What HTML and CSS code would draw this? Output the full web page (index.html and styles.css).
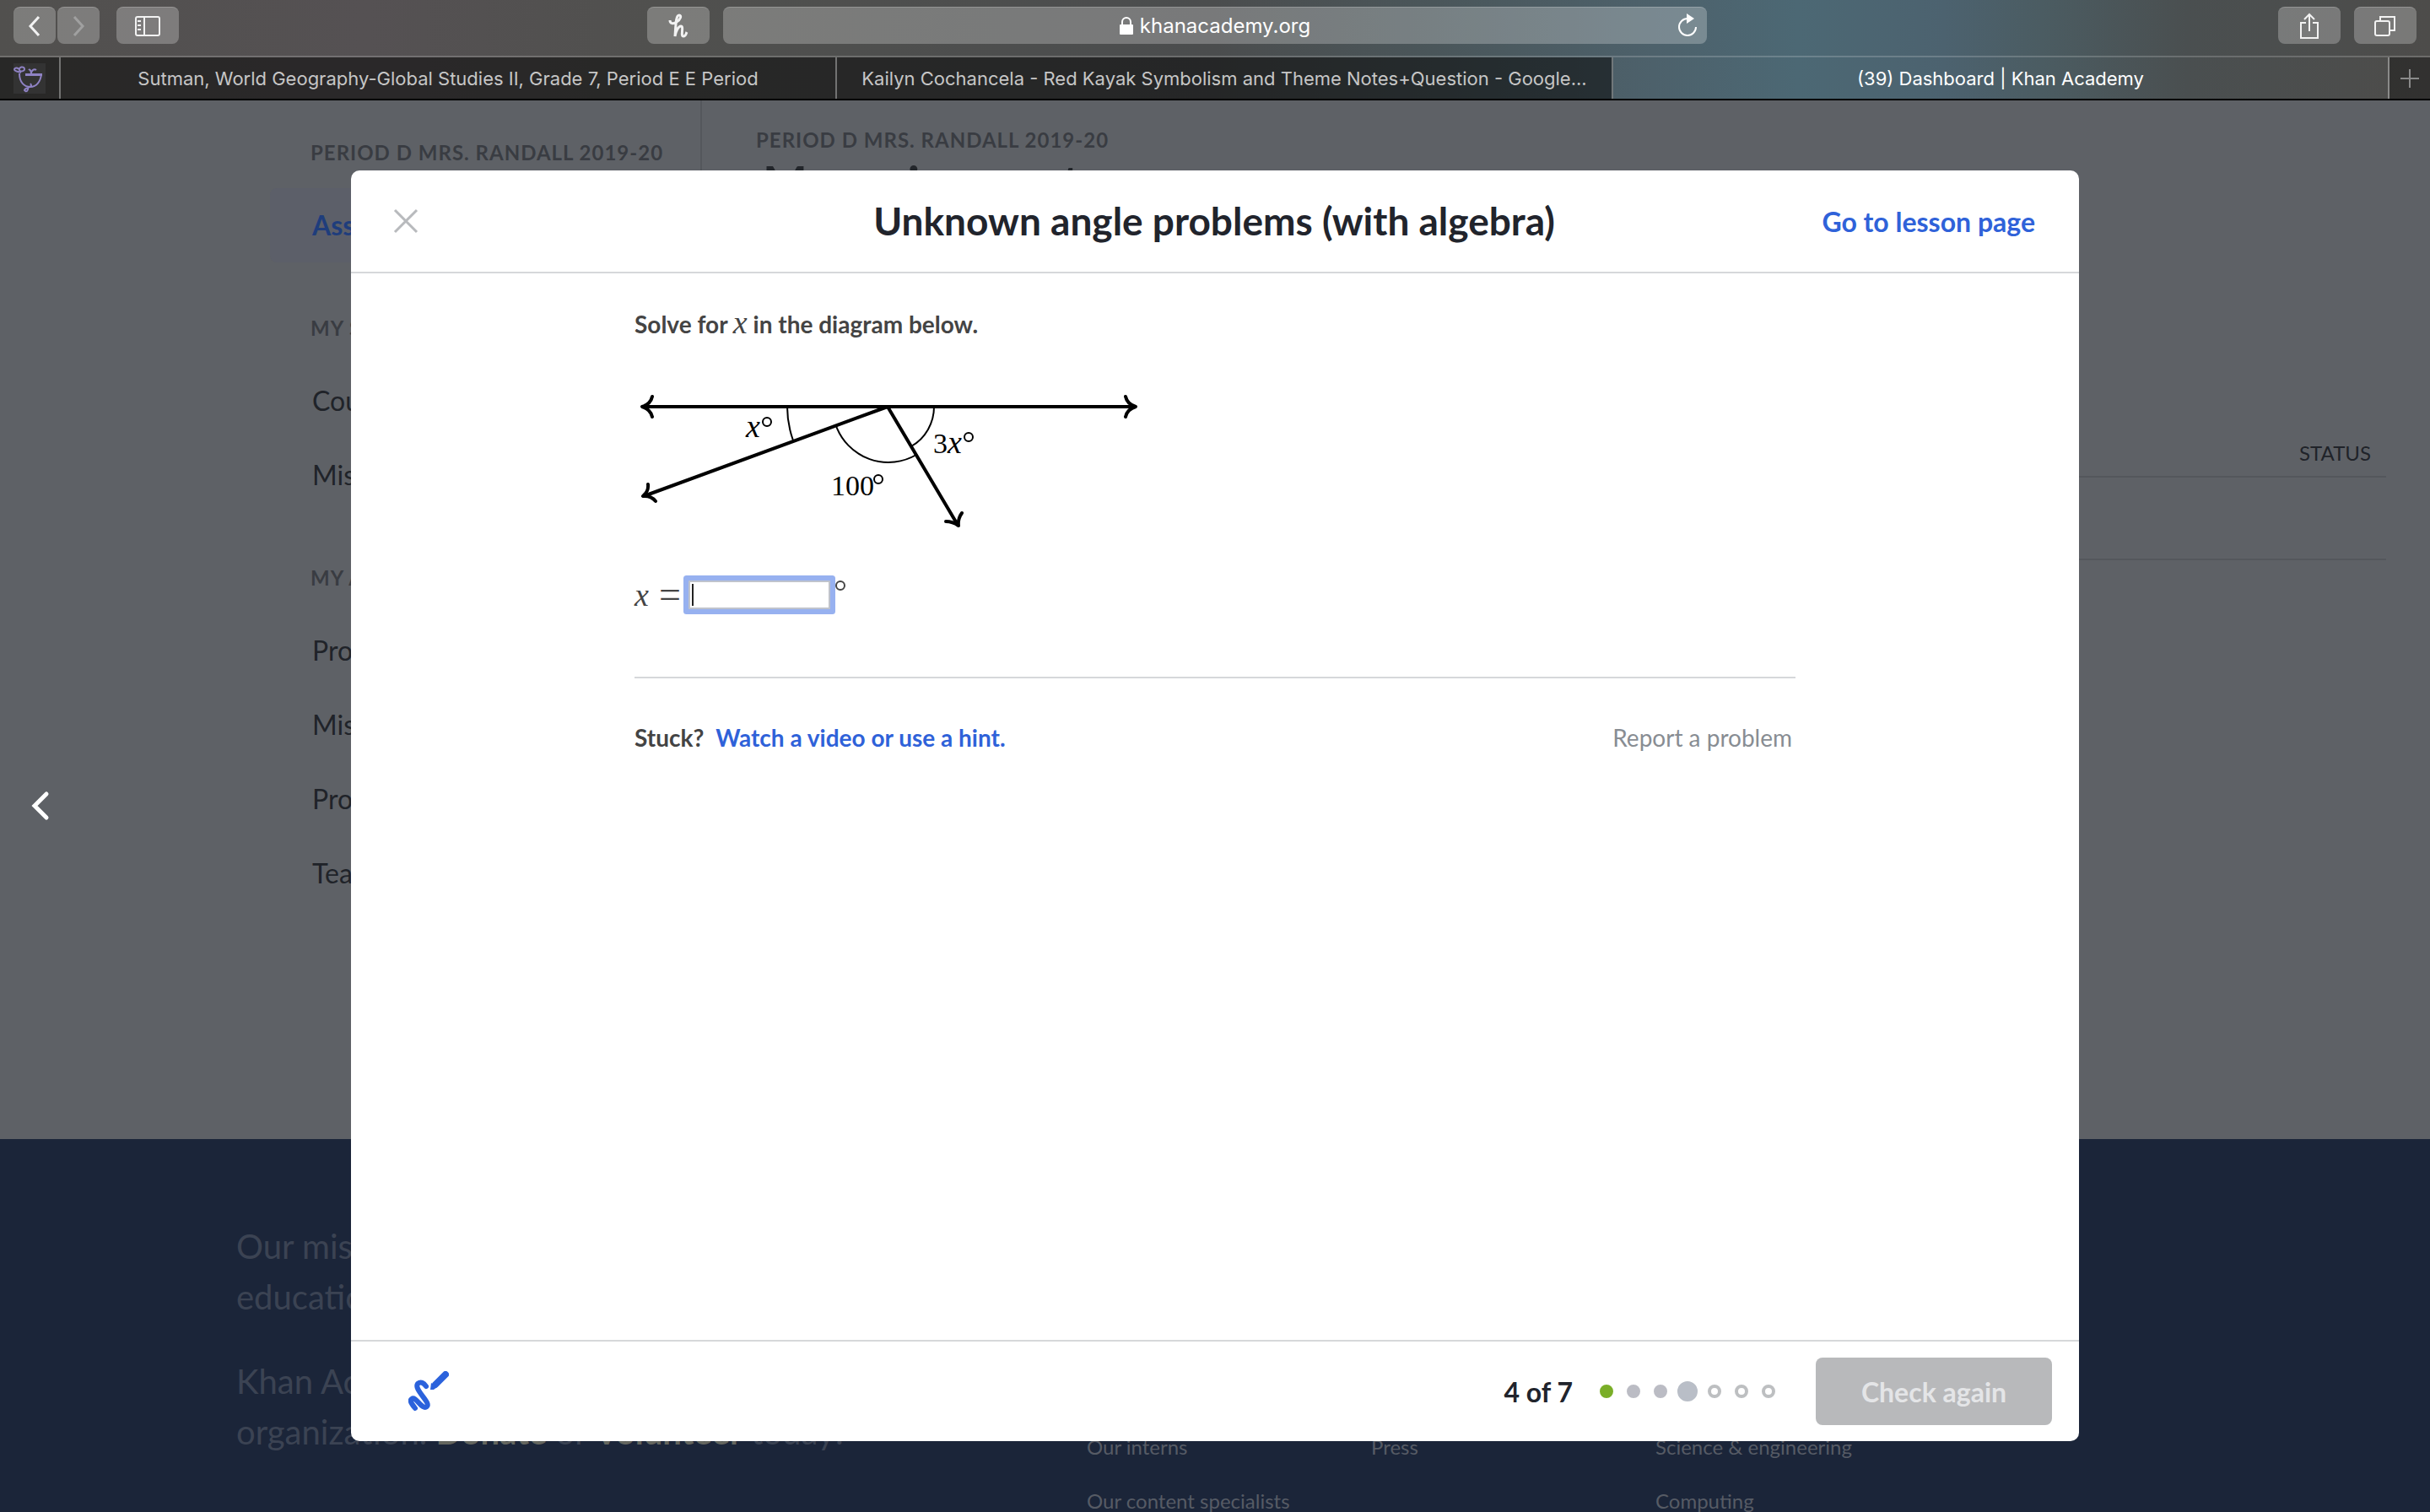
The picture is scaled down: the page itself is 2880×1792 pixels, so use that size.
FILE: index.html
```html
<!DOCTYPE html>
<html lang="en">
<head>
<meta charset="utf-8">
<title>(39) Dashboard | Khan Academy</title>
<link rel="stylesheet" href="styles.css">
</head>
<body>
<header class="browser">
  <div class="toolbar">
    <div class="tools">
      <button class="tool tool-narrow" aria-label="Back"><svg width="16" height="28" viewBox="0 0 16 28"><path d="M13 3 3 14l10 11" /></svg></button>
      <button class="tool tool-narrow tool-off" aria-label="Forward"><svg width="16" height="28" viewBox="0 0 16 28"><path d="m3 3 10 11L3 25" /></svg></button>
      <button class="tool tool-sidebar" aria-label="Show sidebar"><svg width="32" height="26" viewBox="0 0 32 26"><rect x="2" y="2" width="28" height="22" rx="2"/><path d="M12 2v22M4 7h4M4 12h4M4 17h4"/></svg></button>
      <button class="tool tool-honey" aria-label="Honey"><svg class="honey" width="26" height="30" viewBox="0 0 26 30"><path d="M3 8c0 4 4 5 8 2 5-3 6-8 3-8-4 0-4 10-5 25 1-6 4-12 7-12 4 0-1 12 3 12 3 0 3-3 4-5"/></svg></button>
    </div>
    <div class="address">
      <span class="address-text"><svg width="16" height="22" viewBox="0 0 16 22"><rect class="solid" x="0" y="9" width="16" height="12" rx="1"/><path d="M3 10V6a5 5 0 0 1 10 0v4"/></svg>khanacademy.org</span>
      <button class="reload" aria-label="Reload"><svg width="26" height="30" viewBox="0 0 26 30"><path d="M23 16A10 10 0 1 1 13 6"/><path class="solid" d="M12 0v12l9-6z"/></svg></button>
    </div>
    <div class="tools tools-right">
      <button class="tool" aria-label="Share"><svg width="26" height="34" viewBox="0 0 26 34"><path d="M9 13H3v18h20V13h-6M13 23V3M7 9l6-6 6 6"/></svg></button>
      <button class="tool" aria-label="Show tabs"><svg width="28" height="28" viewBox="0 0 28 28"><rect x="2" y="8" width="17" height="17" rx="2"/><path d="M8 8V3h17v16h-5"/></svg></button>
    </div>
  </div>
  <nav class="tabs">
    <a class="tab pinned" href="#" aria-label="Pinned tab"><svg class="mortar" width="38" height="36" viewBox="0 0 38 36"><path d="M7 12c0 11 6 16 13 16s12-6 13-15H14M14 14h20M9 11c-3-1-8-1-8-4 1-3 7-1 6 2m0-1c-1-4 6-5 6-1 0 2-3 3-6 2M18 8c2-2 3 3 3 4 0-3 3-6 6-4M20 24c4 5-6 4-7 8 2 3 5 0 4-3"/></svg></a>
    <a class="tab" href="#">Sutman, World Geography-Global Studies II, Grade 7, Period E E Period</a>
    <a class="tab" href="#">Kailyn Cochancela - Red Kayak Symbolism and Theme Notes+Question - Google...</a>
    <a class="tab active" href="#">(39) Dashboard | Khan Academy</a>
    <button class="new-tab" aria-label="New tab"><svg width="24" height="24" viewBox="0 0 24 24"><path d="M12 1v22M1 12h22"/></svg></button>
  </nav>
</header>

<div class="page">
  <div class="dashboard">
    <nav class="side">
      <h2 class="eyebrow">PERIOD D MRS. RANDALL 2019-20</h2>
      <a class="side-link current" href="#">Assignments</a>
      <h2 class="eyebrow">MY STUFF</h2>
      <a class="side-link" href="#">Courses</a>
      <a class="side-link" href="#">Missions</a>
      <h2 class="eyebrow">MY ACCOUNT</h2>
      <a class="side-link" href="#">Progress</a>
      <a class="side-link" href="#">Missions</a>
      <a class="side-link" href="#">Profile</a>
      <a class="side-link" href="#">Teachers</a>
    </nav>
    <main class="work">
      <p class="eyebrow">PERIOD D MRS. RANDALL 2019-20</p>
      <h1 class="work-title">My assignments</h1>
      <table class="work-table">
        <thead><tr><th>STATUS</th></tr></thead>
        <tbody><tr><td></td></tr></tbody>
      </table>
    </main>
  </div>
  <footer class="site-footer">
    <div class="mission">
      <p>Our mission is to provide a free, world-class education for anyone, anywhere.</p>
      <p>Khan Academy is a 501(c)(3) nonprofit organization. <a href="#">Donate</a> or <a href="#">Volunteer</a> today!</p>
    </div>
    <ul class="links">
      <li>About</li><li><a href="#">News</a></li><li><a href="#">Impact</a></li><li><a href="#">Our team</a></li><li><a href="#">Our interns</a></li><li><a href="#">Our content specialists</a></li>
    </ul>
    <ul class="links">
      <li>Contact</li><li><a href="#">Help center</a></li><li><a href="#">Community</a></li><li><a href="#">Share your story</a></li><li><a href="#">Press</a></li>
    </ul>
    <ul class="links">
      <li>Courses</li><li><a href="#">Math by grade</a></li><li><a href="#">Math</a></li><li><a href="#">Test prep</a></li><li><a href="#">Science &amp; engineering</a></li><li><a href="#">Computing</a></li>
    </ul>
  </footer>

  <button class="previous" aria-label="Previous"><svg width="24" height="38" viewBox="0 0 24 38"><path d="M19 4 5 18l14 14"/></svg></button>

  <section class="modal" role="dialog" aria-labelledby="exercise-title">
    <header class="modal-head">
      <button class="close" aria-label="Close"><svg width="30" height="30" viewBox="0 0 30 30"><path d="m2 2 26 26M28 2 2 28"/></svg></button>
      <h2 class="modal-title" id="exercise-title">Unknown angle problems (with algebra)</h2>
      <a class="lesson" href="#">Go to lesson page</a>
    </header>
    <div class="modal-body">
      <p class="question">Solve for <i class="math">x</i> in the diagram below.</p>
      <svg class="diagram" width="620" height="180" viewBox="0 0 620 180" role="img" aria-label="Three angles on a line">
        <g class="rays">
          <path d="M10 32h583M300 32 11 138M300 32l83 140"/>
          <path d="M21 20q-2 9-12 12 10 3 12 12M582 20q2 9 12 12-10 3-12 12"/>
          <path d="M16 124q1 8-6 14 9-1 15 6M388 158q-5 7-4 15-7-5-15-5"/>
        </g>
        <g class="arcs">
          <path d="M181 32a120 120 0 0 0 7 40M239 55a66 66 0 0 0 95 34M355 32a54 54 0 0 1-27 47"/>
        </g>
        <text x="132" y="68"><tspan class="it">x</tspan></text><circle cx="157" cy="50" r="5"/>
        <text x="354" y="87">3<tspan class="it">x</tspan></text><circle cx="396" cy="68" r="5"/>
        <text x="233" y="137">100</text><circle cx="289" cy="118" r="5"/>
      </svg>
      <div class="answer">
        <label for="answer"><i class="math">x</i><span class="equals">=</span></label>
        <span class="field"><input id="answer" type="text"><span class="caret"></span></span>
        <svg class="degree" width="12" height="12" viewBox="0 0 12 12"><circle cx="6" cy="6" r="5"/></svg>
      </div>
      <div class="help">
        <p>Stuck?<a href="#">Watch a video or use a hint.</a></p>
        <a class="report" href="#">Report a problem</a>
      </div>
    </div>
    <footer class="modal-foot">
      <button class="scratch" aria-label="Scratchpad"><svg width="48" height="48" viewBox="0 0 48 48"><path d="M8 44C4 39 1 35 4 33c5-4 12 14 18 9C27 37 6 22 11 15c4-3 7-1 10 3"/><path class="pen" d="M32 16 44 4"/><path class="solid" d="m26 22 1-8 7 5-4 3z"/></svg></button>
      <span class="count">4 of 7</span>
      <ol class="dots"><li class="right"></li><li class="done"></li><li class="done"></li><li class="now"></li><li></li><li></li><li></li></ol>
      <button class="check" disabled>Check again</button>
    </footer>
  </section>
</div>
</body>
</html>
```
FILE: styles.css
```css
* { box-sizing: border-box; }
body {
  margin: 0;
  height: 100vh;
  display: flex;
  flex-direction: column;
  overflow: hidden;
  font-family: Lato, "Liberation Sans", sans-serif;
  font-size: 28px;
}
h1, h2, p, ul, ol { margin: 0; padding: 0; }
ul, ol { list-style: none; }
a { text-decoration: none; color: inherit; }
button { font: inherit; border: 0; padding: 0; background: none; }
svg { display: block; fill: none; stroke: currentColor; }
svg .solid { fill: currentColor; stroke: none; }

/* Browser chrome */
.browser {
  flex: none;
  font-family: Inter, "Liberation Sans", sans-serif;
  background: linear-gradient(90deg, #51504e 0%, #555153 15%, #50504e 27%, #4b4d4e 50%, #4a565a 59%, #4d616b 68%, #4c6874 74%, #4c626f 80%, #4b5c62 84%, #4a4f50 90%, #4d4c4a 100%);
  border-bottom: 2px solid #000;
}
.toolbar {
  display: grid;
  grid-template-columns: 1fr minmax(0, 1166px) 1fr;
  gap: 16px;
  padding: 8px 16px 14px;
}
.tools { display: flex; }
.tools-right { justify-content: flex-end; gap: 16px; }
.tool {
  width: 74px;
  height: 44px;
  display: grid;
  place-items: center;
  border-radius: 8px;
  border-top: 1px solid #ffffff33;
  background: #ffffff40;
  color: #f2f2f2;
  stroke-width: 2;
}
.tool-narrow { width: 50px; stroke-width: 3; margin-right: 2px; }
.tool-off { color: #a0a0a0; }
.tool-sidebar { margin-left: 18px; }
.tool-honey { margin-left: auto; }
.honey { stroke-width: 3; }
.address {
  display: flex;
  align-items: center;
  border-radius: 8px;
  border-top: 1px solid #ffffff33;
  background: #ffffff40;
  color: #fff;
  font-size: 24px;
  stroke-width: 2;
  padding: 0 10px 0 36px;
}
.address-text { flex: 1; display: flex; justify-content: center; align-items: center; gap: 8px; }
.reload { color: inherit; }
.tabs {
  display: flex;
  height: 51px;
  border-top: 2px solid #ffffff2e;
  font-size: 22px;
}
.tab {
  flex: 1 1 0;
  display: grid;
  place-items: center;
  white-space: nowrap;
  overflow: hidden;
  border-right: 2px solid #ffffff59;
  background: #00000080;
  color: #c6c6c6;
}
.tab.active { background: none; color: #fff; }
.pinned { flex: 0 0 72px; }
.mortar { background: #333; color: #8f82c4; stroke-width: 2; }
.new-tab { width: 48px; display: grid; place-items: center; background: #00000059; color: #8a8a8a; stroke-width: 2; }

/* Dimmed dashboard behind the dialog */
.page { flex: 1; position: relative; overflow: hidden; background: #5e6166; }
.dashboard { display: flex; }
.side {
  width: 832px;
  padding: 46px 0 271px 320px;
  border-right: 2px solid #54575c;
}
.eyebrow { font-size: 24px; line-height: 32px; font-weight: 700; color: #393c42; letter-spacing: 1px; }
.side .eyebrow { margin: 62px 0 26px 48px; }
.side .eyebrow:first-child { margin-top: 0; }
.side-link { display: block; padding-left: 50px; font-size: 32px; line-height: 88px; color: #202329; }
.current { background: #5c5f69; color: #1f3d7c; border-radius: 8px 0 0 8px; font-weight: 700; }
.work { flex: 1; padding: 31px 52px 0 64px; }
.work-title { padding-left: 8px; font-size: 56px; line-height: 68px; color: #24272c; }
.work-table { width: 100%; margin-top: 265px; border-collapse: collapse; }
.work-table th {
  height: 50px;
  padding: 0 18px 6px;
  text-align: right;
  font-size: 24px;
  font-weight: 400;
  color: #202329;
  border-bottom: 2px solid #54575c;
}
.work-table td { height: 98px; border-bottom: 2px solid #54575c; }
.site-footer {
  display: flex;
  height: 640px;
  padding: 77px 0 0 280px;
  background: #1b2539;
  color: #3b4353;
}
.mission { width: 1008px; padding: 20px 240px 0 0; font-size: 40px; line-height: 60px; }
.mission p { margin-bottom: 40px; }
.mission a { font-weight: 700; color: #64665f; }
.links { width: 337px; font-size: 24px; line-height: 64px; color: #565b65; }

.previous { position: absolute; left: 36px; top: 50%; transform: translateY(-50%); color: #fff; stroke-width: 5; stroke-linecap: round; }

/* Exercise dialog */
.modal {
  position: absolute;
  top: 83px;
  bottom: 84px;
  left: 0;
  right: 0;
  width: min(2048px, 90%);
  margin: 0 auto;
  display: flex;
  flex-direction: column;
  border-radius: 10px;
  background: #fff;
  color: #21242c;
}
.modal-head {
  display: grid;
  grid-template-columns: 1fr auto 1fr;
  align-items: center;
  height: 122px;
  padding: 0 52px 0 50px;
  border-bottom: 2px solid #d6d8da;
}
.close { justify-self: start; color: #b8babd; stroke-width: 3; }
.modal-title { font-size: 46px; line-height: 56px; }
.lesson { justify-self: end; font-size: 32px; font-weight: 700; color: #2f62d9; }
.modal-body { flex: 1; padding: 38px 336px 0; color: #444; }
.question { line-height: 44px; font-weight: 700; }
.math, .equals { font-family: "Liberation Serif", serif; font-weight: 400; font-size: 38px; line-height: 20px; }
.diagram { margin-top: 44px; color: #000; }
.rays { stroke-width: 4; stroke-linecap: round; stroke-linejoin: round; }
.arcs, .diagram circle { stroke-width: 2; }
.diagram text { fill: #000; stroke: none; font: 34px "Liberation Serif", serif; }
.diagram .it { font-style: italic; font-size: 38px; }
.answer { display: flex; margin-top: 52px; height: 46px; align-items: center; }
.answer label { display: flex; gap: 12px; align-items: center; margin-right: 9px; }
.answer .equals { font-size: 46px; }
.field { position: relative; display: flex; }
.field input {
  width: 168px;
  height: 34px;
  padding: 0 4px;
  border: 2px solid #bfc3cc;
  font: inherit;
  outline: none;
  box-shadow: 0 0 0 6px #97b1f0;
  border-radius: 1px;
}
.caret { position: absolute; left: 4px; top: 4px; width: 2px; height: 26px; background: #222; }
.degree { align-self: flex-start; margin: 6px 0 0 6px; stroke-width: 2; }
.help {
  display: flex;
  justify-content: space-between;
  margin-top: 74px;
  padding: 48px 4px 0 0;
  border-top: 2px solid #d6d8da;
  line-height: 44px;
  font-weight: 700;
}
.help p a { margin-left: 14px; color: #2f62d9; }
.help .report { font-weight: 400; color: #888d93; }
.modal-foot {
  display: flex;
  align-items: center;
  height: 120px;
  padding: 0 32px 0 68px;
  border-top: 2px solid #d6d8da;
  font-size: 32px;
  font-weight: 700;
}
.scratch { margin-right: auto; color: #2b62dc; stroke-width: 6; stroke-linecap: round; }
.scratch .pen { stroke-width: 8; }
.dots { display: flex; align-items: center; margin: 0 40px 0 24px; }
.dots li { width: 16px; height: 16px; margin: 0 8px; border: 4px solid #bdbfc1; border-radius: 50%; }
.dots .right { background: #7aae28; border-color: #7aae28; }
.dots .done { background: #bbbcc4; border-color: #bbbcc4; }
.dots .now { width: 24px; height: 24px; margin: 0 4px; background: #b9bec7; border-color: #b9bec7; }
.check { width: 280px; height: 80px; border-radius: 8px; background: #b8b9bb; color: #e4e5e7; }
```
